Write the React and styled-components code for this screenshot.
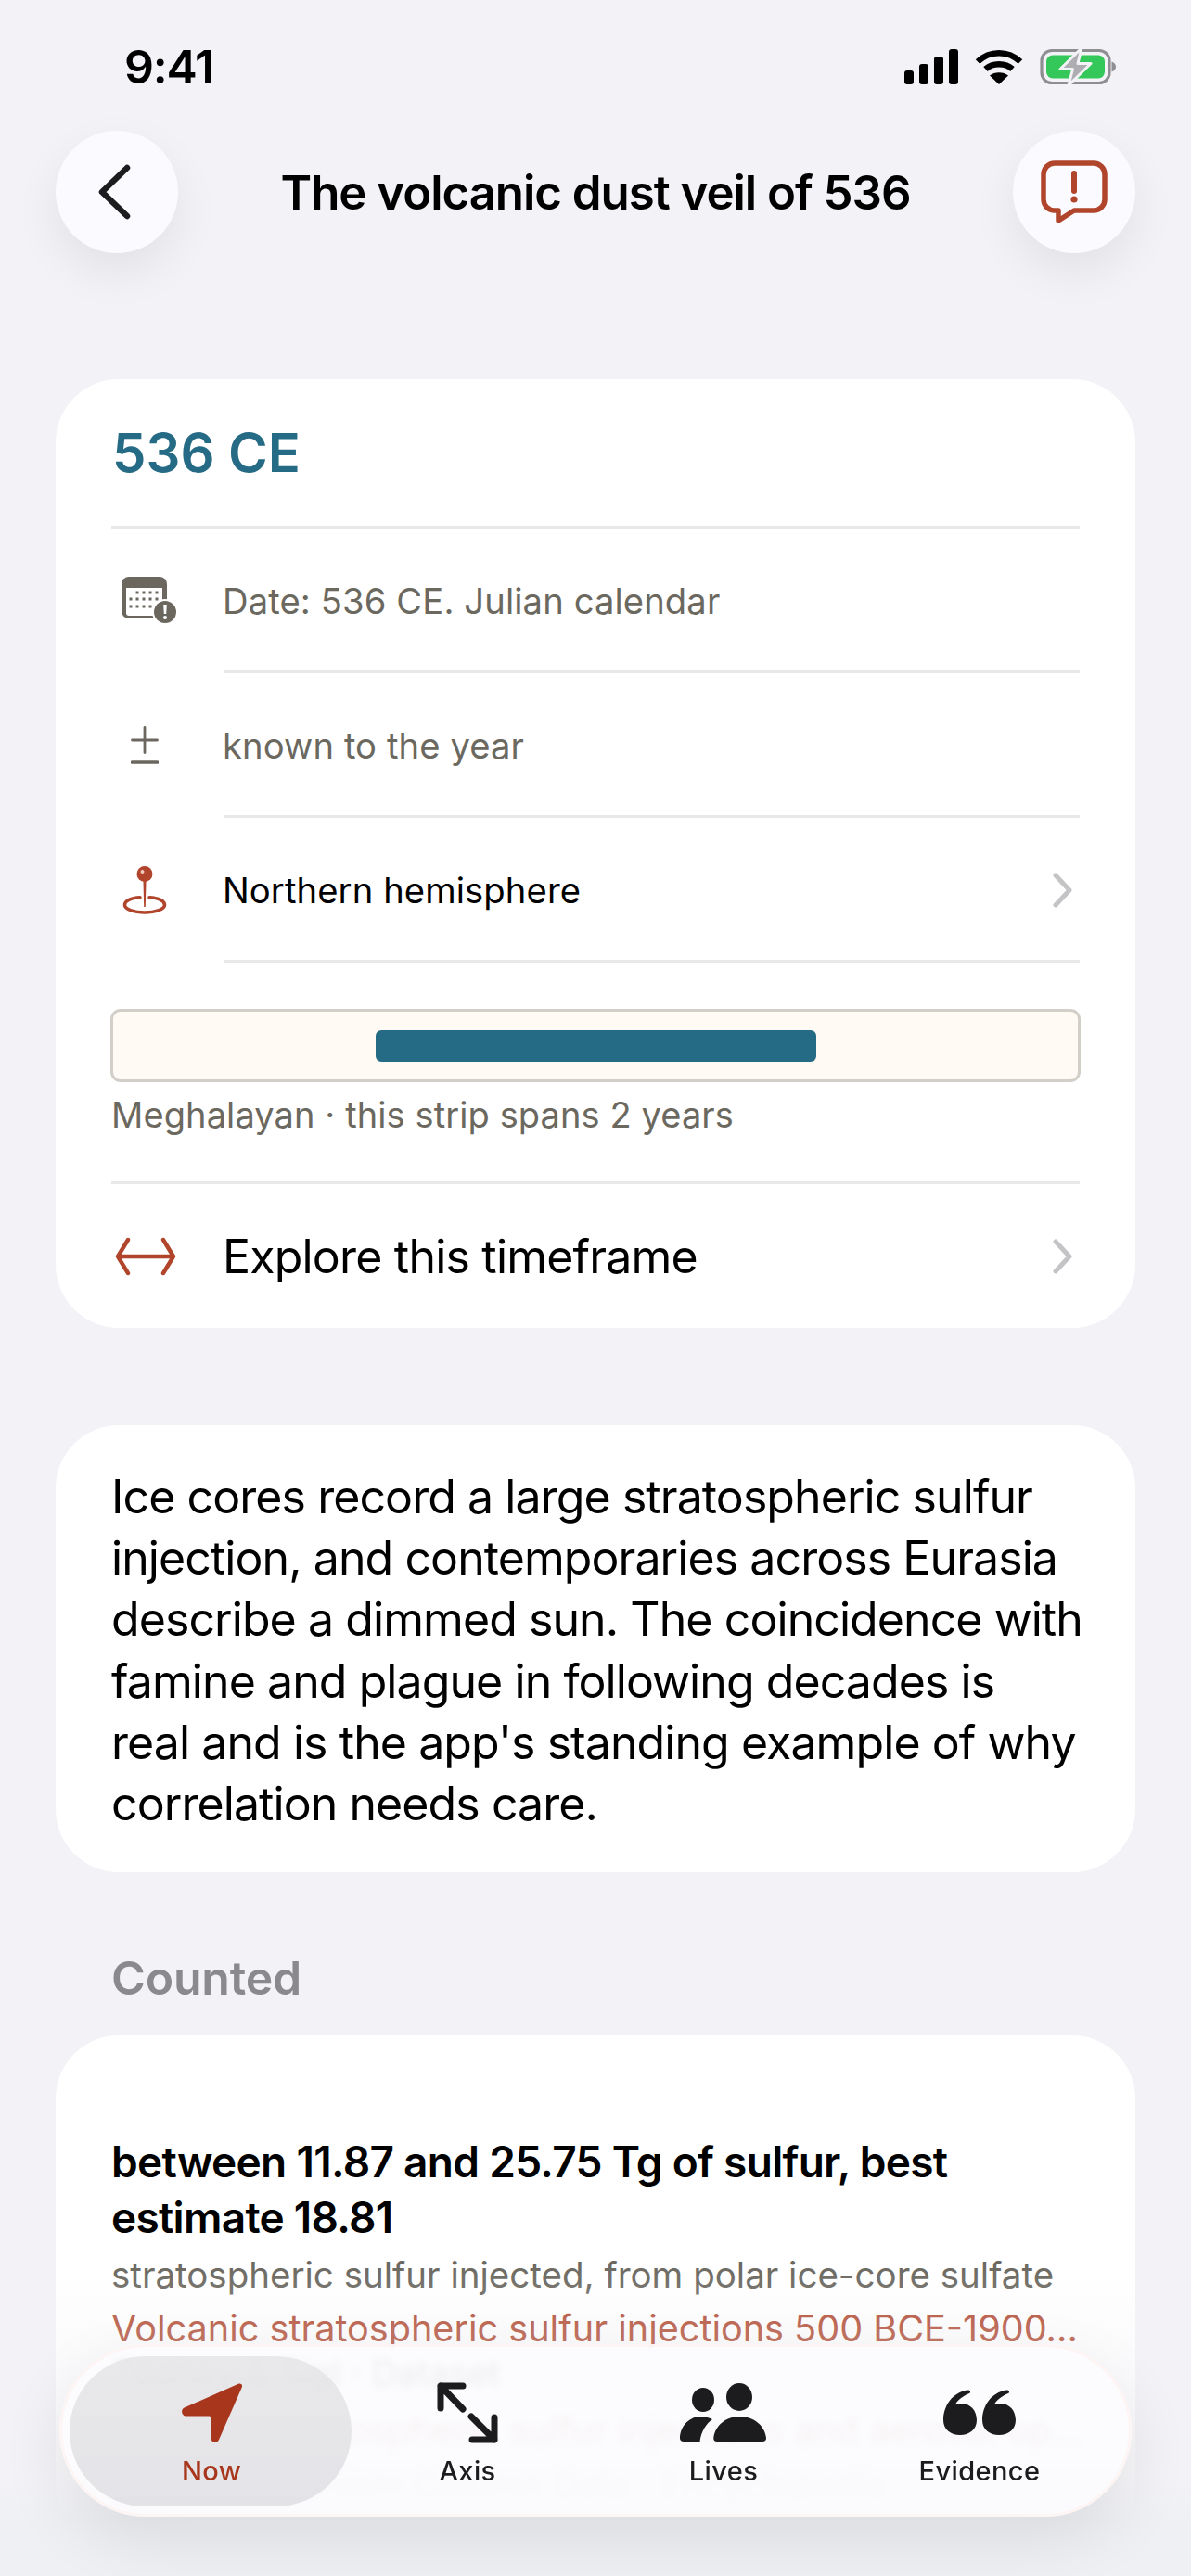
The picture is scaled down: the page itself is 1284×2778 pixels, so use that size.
import React from 'react';
import styled, { createGlobalStyle } from 'styled-components';

const Global = createGlobalStyle`
  html, body { margin: 0; padding: 0; background: #f2f2f7; }
  * { box-sizing: border-box; }
  body { font-family: Inter, "Noto Sans", "Liberation Sans", sans-serif; -webkit-font-smoothing: antialiased; }
`;

const Page = styled.div`
  position: relative;
  width: 1284px;
  height: 2778px;
  overflow: hidden;
  background: #f2f2f7;
  padding: 0 60px;
`;
const StatusBar = styled.div`
  height: 141px;
  display: flex;
  align-items: center;
  justify-content: space-between;
  padding: 0 19px 0 74px;
`;
const Time = styled.div`
  font-size: 50px;
  font-weight: 600;
  color: #000;
  letter-spacing: -1.2px;
  line-height: 1;
  margin-top: 2px;
`;
const StatusIcons = styled.div`
  display: flex;
  align-items: center;
  gap: 18px;
  margin-top: 3px;
`;
const NavBar = styled.div`
  height: 132px;
  display: flex;
  align-items: center;
  justify-content: space-between;
`;
const RoundButton = styled.div`
  width: 132px;
  height: 132px;
  border-radius: 50%;
  background: #fbfbff;
  display: flex;
  align-items: center;
  justify-content: center;
  padding-right: ${p => p.$shift || 0}px;
  box-shadow: 0 20px 50px rgba(0, 0, 0, 0.07);
  flex: none;
`;
const NavTitle = styled.div`
  font-size: 51px;
  font-weight: 600;
  color: #000;
  letter-spacing: -1.05px;
`;
const Card = styled.section`
  background: #fff;
  border-radius: 68px;
  padding: ${p => p.$pad || '0 60px'};
  margin-top: ${p => p.$top}px;
`;
const Heading = styled.div`
  height: 158px;
  display: flex;
  align-items: center;
  font-size: 58px;
  font-weight: 600;
  color: #266b85;
  letter-spacing: 0;
  padding-left: 1px;
`;
const Divider = styled.div`
  height: 3px;
  background: #e8e8e8;
`;
const Row = styled.div`
  display: flex;
  align-items: center;
  height: 156px;
`;
const RowIcon = styled.div`
  width: 121px;
  flex: none;
  display: flex;
  justify-content: flex-start;
  padding-left: ${p => p.$left || 0}px;
`;
const RowBody = styled.div`
  flex: 1;
  height: 100%;
  display: flex;
  align-items: center;
  justify-content: space-between;
  border-bottom: 3px solid #e8e8e8;
  padding: 2px 6px 0 0;
  font-size: 38.2px;
  letter-spacing: 0.1px;
  text-indent: -1px;
  color: ${p => (p.$strong ? '#000' : '#6b6860')};
`;
const Strip = styled.div`
  height: 79px;
  margin: 50px -1px 0;
  border: 3px solid #d2cfc9;
  border-radius: 11px;
  background: #fffaf3;
  display: flex;
  align-items: center;
  justify-content: center;
`;
const StripBar = styled.div`
  width: 475px;
  height: 34px;
  border-radius: 6px;
  background: #266b85;
`;
const Caption = styled.div`
  font-size: 38px;
  line-height: 44px;
  letter-spacing: 0.1px;
  margin: 13px 0 50px;
  color: #6b6860;
`;
const ExploreRow = styled.div`
  height: 155px;
  display: flex;
  align-items: center;
`;
const ExploreLabel = styled.div`
  flex: 1;
  font-size: 50px;
  color: #000;
  letter-spacing: -0.8px;
  text-indent: -1px;
`;
const ExploreEnd = styled.div`
  flex: none;
  padding-right: 6px;
  display: flex;
`;
const Paragraph = styled.p`
  margin: 0 -10px 0 0;
  font-size: 50px;
  line-height: 66.2px;
  color: #000;
  letter-spacing: -0.92px;
`;
const SectionTitle = styled.h2`
  margin: 84px 0 0;
  padding-left: 60px;
  font-size: 50px;
  line-height: 60px;
  font-weight: 600;
  color: #8a8a8e;
  letter-spacing: -0.2px;
`;
const Stat = styled.div`
  font-size: 46px;
  line-height: 60px;
  font-weight: 600;
  color: #000;
  letter-spacing: -0.7px;
`;
const Note = styled.div`
  font-size: ${p => p.$size || 38.5}px;
  line-height: 58px;
  margin-top: ${p => p.$top || 0}px;
  color: ${p => p.$color || '#6b6860'};
  white-space: nowrap;
`;
const BottomFade = styled.div`
  position: absolute;
  left: 0;
  right: 0;
  top: 2440px;
  bottom: 0;
  background: linear-gradient(to bottom, rgba(242,242,247,0) 0%, rgba(242,242,247,0.25) 22%, rgba(242,242,247,0.45) 55%, rgba(242,242,247,0.7) 70%, #eff0f4 82%);
`;
const TabBar = styled.nav`
  position: absolute;
  left: 64px;
  top: 2528px;
  width: 1156px;
  height: 186px;
  border-radius: 93px;
  display: grid;
  grid-template-columns: repeat(4, 276px);
  padding-left: 26px;
  background: rgba(252, 252, 254, 0.9);
  backdrop-filter: blur(4px);
  box-shadow: 0 24px 70px rgba(0, 0, 0, 0.09), inset 0 0 0 3px rgba(255, 235, 230, 0.4);
`;
const Tab = styled.div`
  position: relative;
  display: flex;
  flex-direction: column;
  align-items: center;
  justify-content: flex-start;
  height: 100%;
  color: ${p => (p.$active ? '#a8361c' : '#1c1c1e')};
  &::before {
    content: ${p => (p.$active ? '""' : 'none')};
    position: absolute;
    left: -15px;
    right: -13px;
    top: 13px;
    bottom: 11px;
    border-radius: 81px;
    background: linear-gradient(to bottom, rgba(228,228,230,0.8), rgba(226,226,230,0.95));
  }
`;
const TabIcon = styled.div`
  position: relative;
  height: 70px;
  margin-top: 39px;
  display: flex;
  align-items: center;
  justify-content: center;
`;
const TabLabel = styled.div`
  position: relative;
  margin-top: 9px;
  font-size: 29px;
  line-height: 38px;
  font-weight: 500;
  letter-spacing: 0.4px;
`;

const Signal = () => (
  <svg width="58" height="38" viewBox="0 0 58 38" fill="#000">
    <rect x="0" y="23" width="10" height="15" rx="3" />
    <rect x="16" y="16" width="10" height="22" rx="3" />
    <rect x="32" y="8" width="10" height="30" rx="3" />
    <rect x="48" y="0" width="10" height="38" rx="3" />
  </svg>
);
const Wifi = () => (
  <svg width="52" height="38" viewBox="0 0 52 38" fill="none" stroke="#000" strokeWidth="6.5">
    <path d="M3 13.5C16 1 36 1 49 13.5" />
    <path d="M11.5 21.5C19 14.5 33 14.5 40.5 21.5" />
    <path d="M26 38L16 28.5C21 24 31 24 36 28.5Z" fill="#000" stroke="none" />
  </svg>
);
const Battery = () => (
  <svg width="84" height="42" viewBox="0 0 84 42">
    <rect x="2" y="3.5" width="73" height="35" rx="11" fill="none" stroke="#8e8e93" strokeWidth="3.2" />
    <rect x="7" y="8.5" width="63" height="25" rx="7" fill="#34c759" />
    <path d="M77.5 15.5c3 1 4.5 3 4.5 5.5s-1.5 4.5-4.5 5.5z" fill="#8e8e93" />
    <path d="M45 1L22 23.5h13.5L31 41 55 17.5H41z" fill="#aeaeb2" stroke="#f2f2f7" strokeWidth="3" strokeLinejoin="round" />
  </svg>
);
const BackIcon = () => (
  <svg width="36" height="60" viewBox="0 0 36 60" fill="none" stroke="#1c1c1e" strokeWidth="6.5" strokeLinecap="round" strokeLinejoin="round">
    <path d="M32 4L5 30l27 26" />
  </svg>
);
const ReportIcon = () => (
  <svg width="72" height="68" viewBox="0 0 72 68" fill="none" stroke="#b0452b" strokeWidth="5.5" strokeLinejoin="round" strokeLinecap="round">
    <path d="M15 3h42a12 12 0 0 1 12 12v27a12 12 0 0 1-12 12H36L19 65V54h-4A12 12 0 0 1 3 42V15A12 12 0 0 1 15 3z" />
    <path d="M36 14v19" strokeWidth="6" />
    <circle cx="36" cy="42" r="3.6" fill="#b0452b" stroke="none" />
  </svg>
);
const CalendarIcon = () => (
  <svg width="60" height="52" viewBox="0 0 60 52">
    <path d="M8 0h33a8 8 0 0 1 8 8v37H8a8 8 0 0 1-8-8V8a8 8 0 0 1 8-8z" fill="#6b675f" />
    <path d="M5 12h39v29a1 1 0 0 1-1 1H8a3 3 0 0 1-3-3z" fill="#fff" />
    <g fill="#6b675f">
      {[[17,17],[24,17],[31,17],[38,17],[10,24],[17,24],[24,24],[31,24],[38,24],[10,32],[17,32],[24,32],[31,32]].map(([x, y]) => (
        <rect key={`${x}-${y}`} x={x - 1.5} y={y - 1.5} width="3" height="3" />
      ))}
    </g>
    <circle cx="47" cy="38" r="14" fill="#fff" />
    <circle cx="47" cy="38" r="12" fill="#6b675f" />
    <path d="M45.2 30h3.6l-.6 10h-2.4z" fill="#fff" />
    <circle cx="47" cy="44" r="2" fill="#fff" />
  </svg>
);
const PlusMinusIcon = () => (
  <svg width="30" height="42" viewBox="0 0 30 42" fill="none" stroke="#6b675f" strokeLinecap="round">
    <path d="M1.5 15h27M15 1.5v27" strokeWidth="2.8" />
    <path d="M1.5 39h27" strokeWidth="3.6" />
  </svg>
);
const PinIcon = () => (
  <svg width="48" height="52" viewBox="0 0 48 52" fill="none">
    <path d="M19 33.800C9 34.400 2.500 37.500 2.500 42c0 4.400 9.600 8 21.500 8s21.500-3.600 21.500-8c0-4.500-6.500-7.600-16.500-8.200" stroke="#b0452b" strokeWidth="3.6" strokeLinecap="round" />
    <circle cx="24" cy="8.500" r="8.500" fill="#b0452b" />
    <path d="M22.400 14h3.200l-.8 30h-1.600z" fill="#b0452b" />
    <circle cx="21.500" cy="6" r="2" fill="#f0c8bd" />
  </svg>
);
const Chevron = () => (
  <svg width="24" height="38" viewBox="0 0 24 38" fill="none" stroke="#c4c4c6" strokeWidth="5" strokeLinecap="round" strokeLinejoin="round">
    <path d="M4 3l15 16L4 35" />
  </svg>
);
const SpanIcon = () => (
  <svg width="66" height="42" viewBox="0 0 66 42" fill="none" stroke="#b0452b" strokeWidth="4.400" strokeLinecap="round" strokeLinejoin="round">
    <path d="M4 21h58M14 3L3 21l11 18M52 3l11 18-11 18" />
  </svg>
);
const NowIcon = () => (
  <svg width="66" height="66" viewBox="0 0 66 66">
    <path d="M62 1.800c2.200-1.300 4.800.8 4 3.200L41 62c-1.800 4.500-8.500 3.400-8.500-1.500V38.500a2 2 0 0 0-2-2H6c-5 0-6.800-6.500-2.400-9z" fill="#a8361c" />
  </svg>
);
const AxisIcon = () => (
  <svg width="66" height="66" viewBox="0 0 66 66" fill="none" stroke="#1c1c1e" strokeWidth="7" strokeLinecap="round" strokeLinejoin="round">
    <path d="M4 28V4h24M4 4l24 25" />
    <path d="M62 38v24H38M62 62L37 37" />
  </svg>
);
const LivesIcon = () => (
  <svg width="94" height="64" viewBox="0 0 94 64" fill="#1c1c1e">
    <ellipse cx="25" cy="18" rx="12" ry="13" />
    <ellipse cx="64" cy="15" rx="14" ry="15" />
    <path d="M4 63c-2.500 0-4-1.400-4-3.500C0 47 10 36 22 36c5 0 9 1 13 3-7 5-12 13-13.500 24z" />
    <path d="M40 63c-2.500 0-4-1.500-3.700-4C38 46 49 36 64.500 36S91.500 46 93 59c.3 2.500-1.500 4-4 4z" />
  </svg>
);
const EvidenceIcon = () => (
  <svg width="78" height="50" viewBox="0 0 78 50" fill="#1c1c1e">
    <path d="M0 33C0 17 10 3 26 0.500c3-.5 4 2.500 2 3.500C20 7.500 15 11.500 13 16 26 12 36 20 36 33c0 10-8 16-18 16S0 43 0 33z" />
    <path d="M42 33C42 17 52 3 68 0.500c3-.5 4 2.500 2 3.500C62 7.500 57 11.500 55 16 68 12 78 20 78 33c0 10-8 16-18 16S42 43 42 33z" />
  </svg>
);

export default function App() {
  return (
    <>
      <Global />
      <Page>
        <StatusBar>
          <Time>9:41</Time>
          <StatusIcons>
            <Signal />
            <Wifi />
            <Battery />
          </StatusIcons>
        </StatusBar>
        <NavBar>
          <RoundButton $shift={6}><BackIcon /></RoundButton>
          <NavTitle>The volcanic dust veil of 536</NavTitle>
          <RoundButton><ReportIcon /></RoundButton>
        </NavBar>

        <Card $top={136}>
          <Heading>536 CE</Heading>
          <Divider />
          <Row>
            <RowIcon $left={11}><CalendarIcon /></RowIcon>
            <RowBody>Date: 536 CE. Julian calendar</RowBody>
          </Row>
          <Row>
            <RowIcon $left={21}><PlusMinusIcon /></RowIcon>
            <RowBody>known to the year</RowBody>
          </Row>
          <Row>
            <RowIcon $left={12}><PinIcon /></RowIcon>
            <RowBody $strong>Northern hemisphere<Chevron /></RowBody>
          </Row>
          <Strip><StripBar /></Strip>
          <Caption>Meghalayan · this strip spans 2 years</Caption>
          <Divider />
          <ExploreRow>
            <RowIcon $left={4}><SpanIcon /></RowIcon>
            <ExploreLabel>Explore this timeframe</ExploreLabel>
            <ExploreEnd><Chevron /></ExploreEnd>
          </ExploreRow>
        </Card>

        <Card $top={105} $pad="44px 60px 41px">
          <Paragraph>
            Ice cores record a large stratospheric sulfur injection, and contemporaries across Eurasia describe a dimmed sun. The coincidence with famine and plague in following decades is<br />real and is the app's standing example of why correlation needs care.
          </Paragraph>
        </Card>

        <SectionTitle>Counted</SectionTitle>
        <Card $top={32} $pad="106px 60px 40px">
          <Stat>between 11.87 and 25.75 Tg of sulfur, best estimate 18.81</Stat>
          <Note $top={3}>stratospheric sulfur injected, from polar ice-core sulfate</Note>
          <Note $size={39.6} $color="#b0452b">Volcanic stratospheric sulfur injections 500 BCE-1900...</Note>
          <Note $top={-10} $color="#1c1c1e">Toohey &amp; Sigl · Dataset</Note>
          <Note $top={4} $size={39.6} $color="#b0452b">Volcanic stratospheric sulfur injections and aerosol op...</Note>
          <Note>Global Volcanism Column Data · Encyclopedia</Note>
        </Card>

        <BottomFade />
        <TabBar>
          <Tab $active>
            <TabIcon><NowIcon /></TabIcon>
            <TabLabel>Now</TabLabel>
          </Tab>
          <Tab>
            <TabIcon><AxisIcon /></TabIcon>
            <TabLabel>Axis</TabLabel>
          </Tab>
          <Tab>
            <TabIcon><LivesIcon /></TabIcon>
            <TabLabel>Lives</TabLabel>
          </Tab>
          <Tab>
            <TabIcon><EvidenceIcon /></TabIcon>
            <TabLabel>Evidence</TabLabel>
          </Tab>
        </TabBar>
      </Page>
    </>
  );
}
